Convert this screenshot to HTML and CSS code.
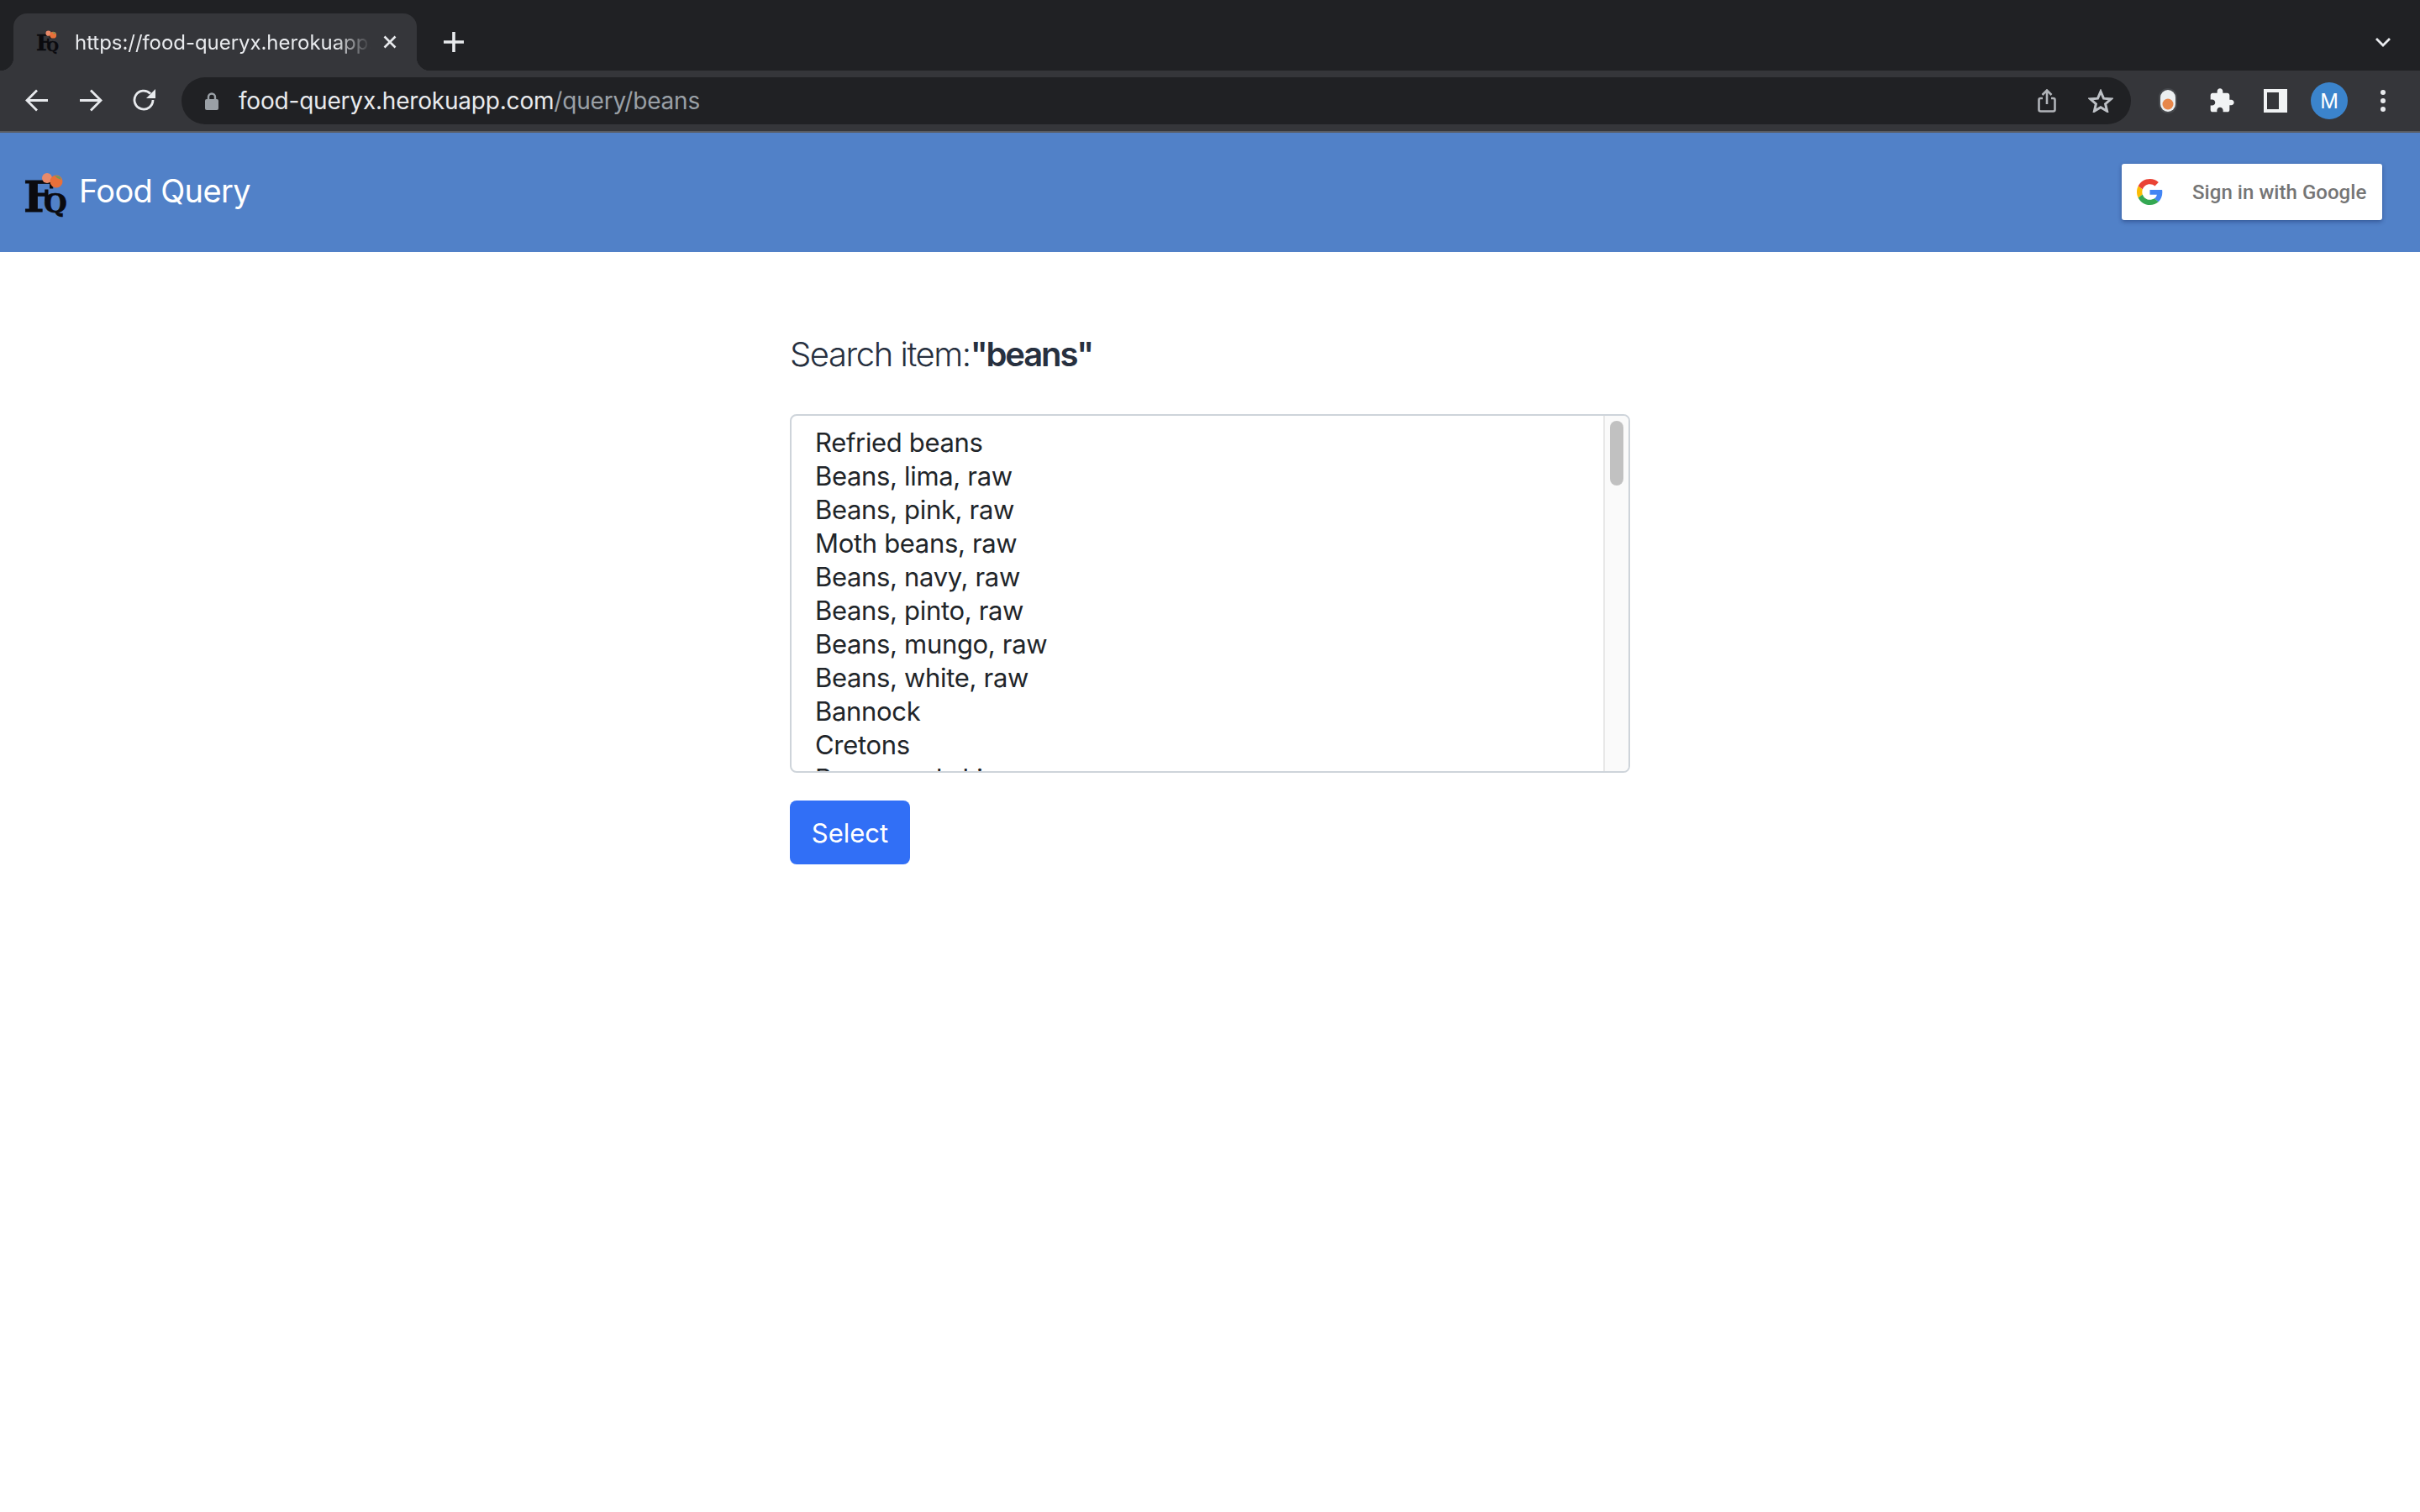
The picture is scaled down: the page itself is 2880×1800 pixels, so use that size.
FILE: index.html
```html
<!DOCTYPE html>
<html lang="en">
<head>
<meta charset="utf-8">
<title>Food Query</title>
<link rel="stylesheet" href="styles.css">
</head>
<body>
<div class="browser">
  <div class="tabstrip">
    <div class="tab">
      <svg class="favicon" viewBox="0 0 50 56"><text class="logo-f" x="0" y="47">F</text><text class="logo-q" x="24" y="48">Q</text><circle class="logo-a1" cx="28" cy="7" r="6"/><circle class="logo-a2" cx="39" cy="11" r="7.5"/><path class="logo-leaf" d="M37 4l6 1 2 4-5-2z"/></svg>
      <span class="tab-title">https://food-queryx.herokuapp.com/query/beans</span>
      <svg class="tab-close" viewBox="0 0 16 16"><path d="M1.5 1.5l13 13M14.500 1.500l-13 13"/></svg>
    </div>
    <div class="strip-btn"><svg class="plus" viewBox="0 0 24 24"><path d="M12 0v24M0 12h24"/></svg></div>
    <div class="strip-btn strip-end"><svg class="chevron" viewBox="0 0 18 11"><path d="M1 1l8 8 8-8"/></svg></div>
  </div>
  <div class="toolbar">
    <div class="tool"><svg class="nav-icon" viewBox="0 0 28 28"><path d="M27 13.500H2M14 1.500L2 13.500l12 12"/></svg></div>
    <div class="tool"><svg class="nav-icon" viewBox="0 0 28 28"><path d="M1 13.500h25M14 1.500l12 12-12 12"/></svg></div>
    <div class="tool"><svg class="nav-icon" viewBox="0 0 28 28"><path d="M21 5.500A11 11 0 1 0 24 13"/><path class="solid" d="M27 0v11H16z"/></svg></div>
    <div class="omnibox">
      <svg class="lock" viewBox="0 0 16 21"><path class="lock-shackle" d="M4 9V5.500a4 4 0 0 1 8 0V9"/><rect class="lock-body" x="0" y="8" width="16" height="13" rx="2"/></svg>
      <span class="url"><span class="url-host">food-queryx.herokuapp.com</span><span class="url-path">/query/beans</span></span>
      <div class="omni-actions">
        <div class="tool"><svg class="share" viewBox="0 0 22 28"><path d="M6 11H3.500A2 2 0 0 0 1.500 13v11.500a2 2 0 0 0 2 2h15a2 2 0 0 0 2-2V13a2 2 0 0 0-2-2H16M11 18V2M5.500 7L11 1.500 16.500 7"/></svg></div>
        <div class="tool"><svg class="star" viewBox="0 0 30 28"><path d="M15 3l3.500 8.200 8.800.700-6.700 5.800 2 8.600L15 21.700l-7.600 4.600 2-8.600-6.700-5.800 8.800-.700z"/></svg></div>
      </div>
    </div>
    <div class="tool ext-first"><svg class="pill" viewBox="0 0 22 30"><rect class="pill-ring" x="0" y="0" width="22" height="30" rx="11"/><rect class="pill-body" x="2" y="2" width="18" height="26" rx="9"/><circle class="pill-dot" cx="11" cy="19" r="6.500"/></svg></div>
    <div class="tool"><svg class="puzzle" viewBox="0 0 24 24"><path d="M20.500 11H19V7c0-1.100-.9-2-2-2h-4V3.500C13 2.120 11.880 1 10.500 1S8 2.120 8 3.500V5H4c-1.100 0-1.990.9-1.990 2v3.800H3.500c1.490 0 2.700 1.210 2.700 2.700s-1.210 2.700-2.700 2.700H2V20c0 1.100.9 2 2 2h3.800v-1.500c0-1.490 1.210-2.700 2.700-2.700 1.490 0 2.700 1.210 2.700 2.700V22H17c1.100 0 2-.9 2-2v-4h1.500c1.380 0 2.500-1.120 2.500-2.500S21.880 11 20.500 11z"/></svg></div>
    <div class="tool"><div class="panel-icon"><div class="panel-gap"></div></div></div>
    <div class="tool"><div class="avatar">M</div></div>
    <div class="tool"><div class="menu-dots"><i></i><i></i><i></i></div></div>
  </div>
</div>
<header class="navbar">
  <div class="brand">
    <svg class="logo" viewBox="0 0 50 56"><text class="logo-f" x="0" y="47">F</text><text class="logo-q" x="24" y="48">Q</text><circle class="logo-a1" cx="28" cy="7" r="6"/><circle class="logo-a2" cx="39" cy="11" r="7.500"/><path class="logo-leaf" d="M37 4l6 1 2 4-5-2z"/></svg>
    <span class="brand-name">Food Query</span>
  </div>
  <div class="gbtn">
    <svg class="glogo" viewBox="0 0 48 48"><path fill="#EA4335" d="M24 9.500c3.540 0 6.710 1.220 9.210 3.600l6.850-6.850C35.900 2.380 30.470 0 24 0 14.620 0 6.510 5.380 2.560 13.220l7.980 6.190C12.430 13.720 17.740 9.500 24 9.500z"/><path fill="#4285F4" d="M46.980 24.550c0-1.570-.15-3.090-.38-4.550H24v9.020h12.940c-.58 2.960-2.260 5.480-4.780 7.180l7.730 6c4.510-4.180 7.090-10.360 7.090-17.650z"/><path fill="#FBBC05" d="M10.530 28.590c-.48-1.450-.76-2.990-.76-4.590s.27-3.140.76-4.590l-7.980-6.190C.92 16.460 0 20.120 0 24c0 3.880.92 7.540 2.560 10.780l7.970-6.190z"/><path fill="#34A853" d="M24 48c6.480 0 11.930-2.130 15.890-5.810l-7.730-6c-2.150 1.450-4.920 2.300-8.160 2.300-6.260 0-11.570-4.220-13.470-9.910l-7.980 6.190C6.510 42.620 14.620 48 24 48z"/></svg>
    <span class="gbtn-text">Sign in with Google</span>
  </div>
</header>
<main class="content">
  <h1 class="search-title">Search item:<strong>"beans"</strong></h1>
  <div class="listbox">
    <ul class="options">
      <li>Refried beans</li>
      <li>Beans, lima, raw</li>
      <li>Beans, pink, raw</li>
      <li>Moth beans, raw</li>
      <li>Beans, navy, raw</li>
      <li>Beans, pinto, raw</li>
      <li>Beans, mungo, raw</li>
      <li>Beans, white, raw</li>
      <li>Bannock</li>
      <li>Cretons</li>
      <li>Beans and skim</li>
    </ul>
    <div class="scrollrail"><div class="scrollthumb"></div></div>
  </div>
  <button class="select-btn" type="button">Select</button>
</main>
</body>
</html>
```

FILE: styles.css
```css
* { box-sizing: border-box; }
html, body { margin: 0; padding: 0; background: #fff; }
body { width: 2880px; height: 1800px; overflow: hidden; font-family: Inter, "Liberation Sans", sans-serif; }

.tabstrip { display: flex; height: 84px; padding: 16px 0 0 16px; background: #202124; }
.tab { position: relative; display: flex; align-items: center; width: 480px; padding: 0 20px 0 27px; background: #35363a; border-radius: 16px 16px 0 0; }
.tab::before, .tab::after { content: ""; position: absolute; bottom: 0; width: 16px; height: 16px; }
.tab::before { left: -16px; background: radial-gradient(circle at 0 0, transparent 16px, #35363a 16.5px); }
.tab::after { right: -16px; background: radial-gradient(circle at 100% 0, transparent 16px, #35363a 16.5px); }
.favicon { width: 26px; height: 29px; flex: none; margin-right: 20px; overflow: visible; }
.tab-title { flex: 1; overflow: hidden; white-space: nowrap; font-size: 24px; letter-spacing: -.05px; color: #e8eaed; -webkit-mask-image: linear-gradient(90deg, #000 88%, transparent 100%); mask-image: linear-gradient(90deg, #000 88%, transparent 100%); }
.tab-close { width: 16px; height: 16px; flex: none; margin: 0 4px 0 15px; fill: none; stroke: #e8eaed; stroke-width: 2.600; }
.strip-btn { display: flex; align-items: center; justify-content: center; width: 64px; margin-left: 12px; }
.strip-end { margin-left: auto; margin-right: 12px; }
.plus { width: 24px; height: 24px; fill: none; stroke: #e8eaed; stroke-width: 3.600; }
.chevron { width: 18px; height: 11px; fill: none; stroke: #e8eaed; stroke-width: 2.800; }

.toolbar { display: flex; align-items: center; height: 74px; padding: 0 12px; background: #35363a; border-bottom: 2px solid #5a5c61; }
.tool { display: flex; align-items: center; justify-content: center; width: 64px; height: 64px; flex: none; }
.nav-icon { width: 28px; height: 28px; fill: none; stroke: #e8eaed; stroke-width: 2.800; }
.nav-icon .solid { fill: #e8eaed; stroke: none; }
.omnibox { display: flex; align-items: center; flex: 1; height: 56px; margin: 0 12px; padding: 0 4px 0 28px; background: #202124; border-radius: 28px; }
.lock { width: 16px; height: 21px; flex: none; margin-right: 24px; }
.lock-body { fill: #9aa0a6; }
.lock-shackle { fill: none; stroke: #9aa0a6; stroke-width: 2.400; }
.url { flex: 1; white-space: nowrap; font-size: 28px; letter-spacing: -.2px; }
.url-host { color: #e8eaed; }
.url-path { color: #9aa0a6; }
.omni-actions { display: flex; }
.share { width: 22px; height: 28px; fill: none; stroke: #b0b3b8; stroke-width: 2.600; }
.star { width: 30px; height: 28px; fill: none; stroke: #bdc1c6; stroke-width: 3; }
.pill { width: 22px; height: 30px; }
.pill-ring { fill: #47494d; }
.pill-body { fill: #eceff0; }
.pill-dot { fill: #e8874a; }
.puzzle { width: 32px; height: 32px; fill: #f1f3f4; }
.panel-icon { width: 28px; height: 28px; padding: 4px 0 4px 4px; background: #f1f3f4; }
.panel-gap { width: 14px; height: 20px; background: #35363a; }
.avatar { display: flex; align-items: center; justify-content: center; width: 44px; height: 44px; border-radius: 50%; background: #3b84cc; color: #fff; font-size: 24px; }
.menu-dots { display: flex; flex-direction: column; gap: 4px; }
.menu-dots i { display: block; width: 6px; height: 6px; border-radius: 50%; background: #e8eaed; }

.navbar { display: flex; align-items: center; justify-content: space-between; height: 142px; padding: 0 45px 0 28px; background: #5181c8; }
.brand { display: flex; align-items: flex-start; }
.logo { width: 50px; height: 56px; flex: none; margin: 8px 16px 0 0; overflow: visible; }
.brand-name { padding-top: 6px; font-size: 38px; line-height: 48px; letter-spacing: -.65px; color: #fff; }
.logo-f { font-family: "DejaVu Serif", serif; font-weight: 700; font-size: 50px; fill: #0b0b0f; stroke: #0b0b0f; stroke-width: .8; }
.logo-q { font-family: "DejaVu Serif", serif; font-weight: 700; font-size: 32px; fill: #0b0b0f; stroke: #0b0b0f; stroke-width: .6; }
.logo-a1 { fill: #e98a6a; }
.logo-a2 { fill: #e8703a; }
.logo-leaf { fill: #6f9a58; }

.gbtn { display: flex; align-items: center; width: 310px; height: 67px; margin-bottom: 1px; padding-left: 18px; background: #fff; border-radius: 3px; box-shadow: 0 2px 5px rgba(20, 40, 90, .45); }
.glogo { width: 31px; height: 31px; flex: none; margin-right: 35px; }
.gbtn-text { font-family: Roboto, sans-serif; font-weight: 500; font-size: 24px; letter-spacing: .05px; color: #757575; white-space: nowrap; }

.content { width: 1000px; margin: 0 auto; padding-top: 98px; }
.search-title { margin: 0 0 47px; font-size: 40px; line-height: 48px; font-weight: 300; letter-spacing: -1.45px; color: #27303f; }
.search-title strong { font-weight: 600; letter-spacing: -2.1px; }
.listbox { display: flex; height: 427px; overflow: hidden; background: #fff; border: 2px solid #ced4da; border-radius: 8px; }
.options { flex: 1; margin: 0; padding: 12px 0 0 28px; list-style: none; font-size: 31px; line-height: 40px; letter-spacing: -.33px; color: #212529; }
.scrollrail { width: 30px; padding: 6px 6px 0; background: #fafafa; border-left: 2px solid #e8e8e8; }
.scrollthumb { width: 16px; height: 77px; border-radius: 8px; background: #c1c1c1; }
.select-btn { display: block; height: 76px; width: 143px; margin-top: 33px; padding: 0; border: 0; border-radius: 8px; background: #316ff6; color: #fff; font-family: Inter, "Liberation Sans", sans-serif; font-size: 31px; }
```
